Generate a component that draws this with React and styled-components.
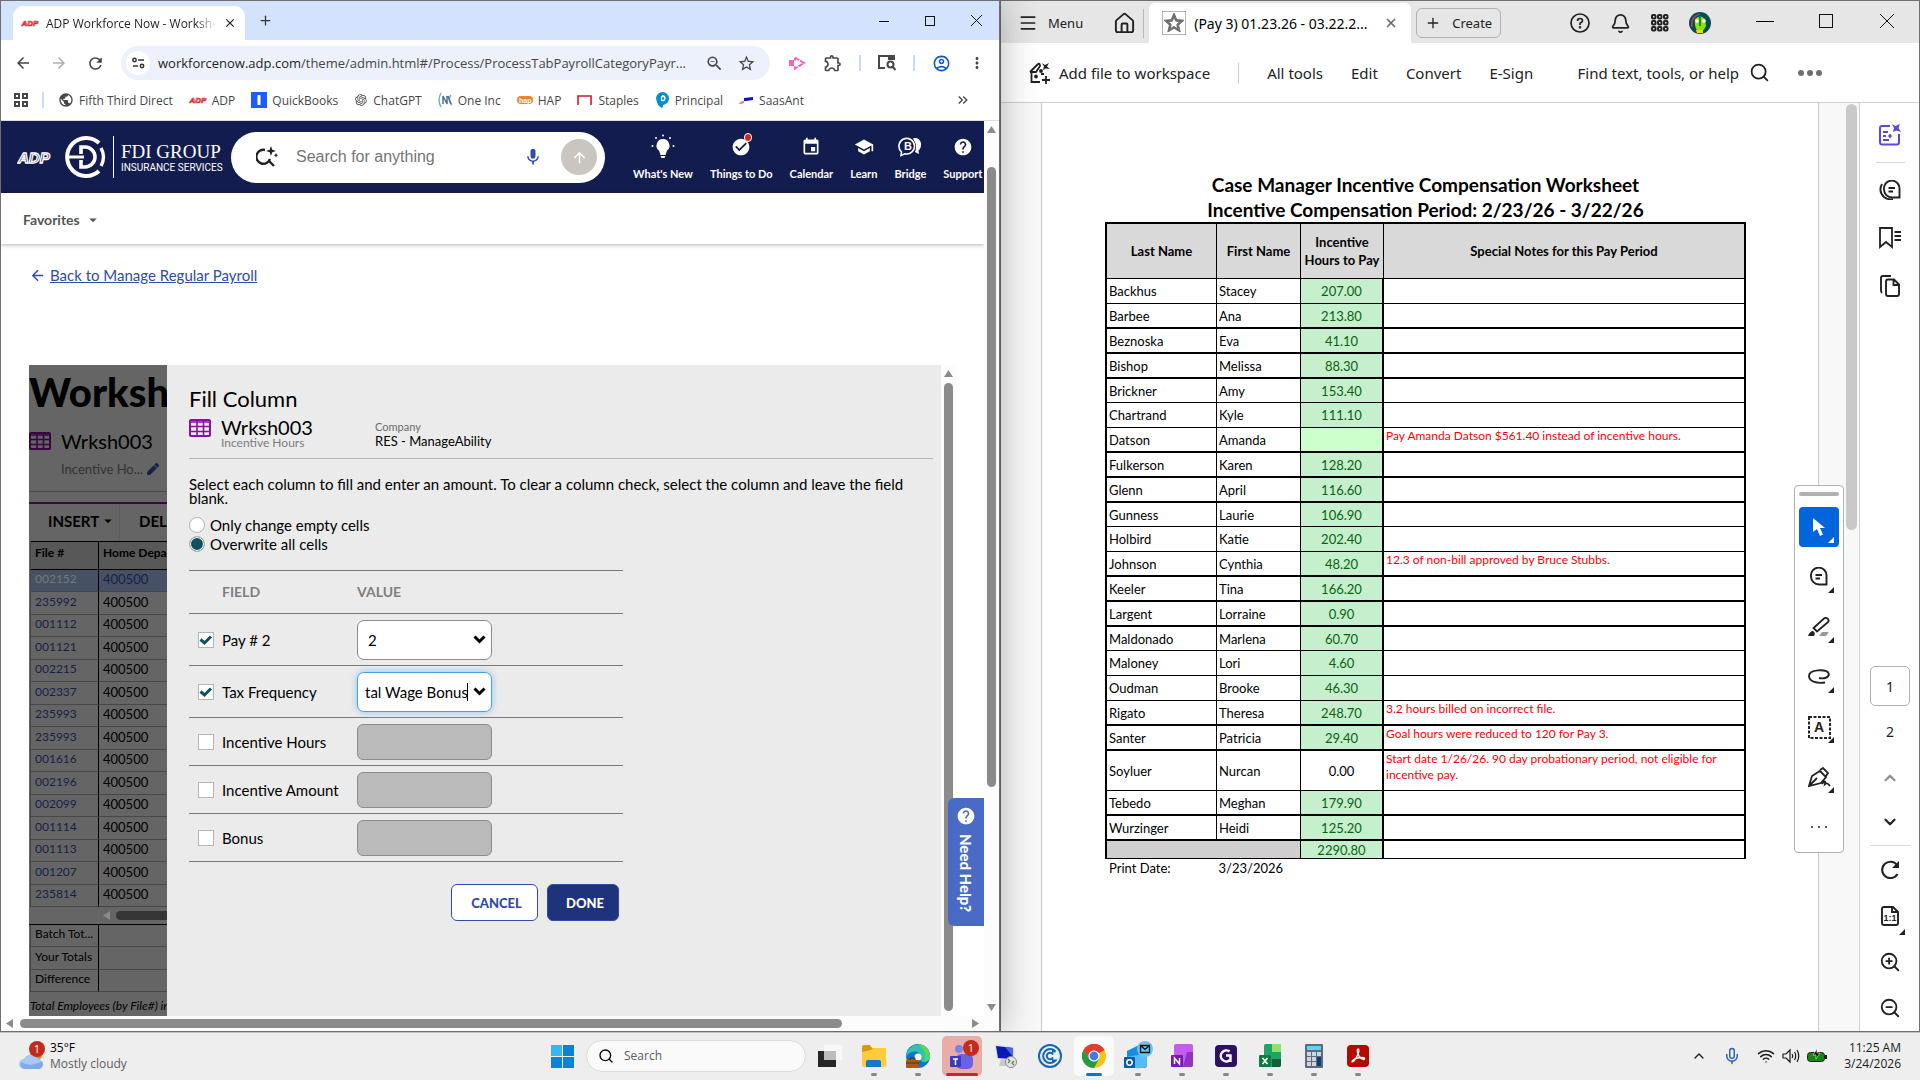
import React from "react";
import styled, { createGlobalStyle } from "styled-components";
import {
  MdArrowBack,
  MdArrowDropDown,
  MdArrowForward,
  MdArrowUpward,
  MdCheckCircle,
  MdClose,
  MdEvent,
  MdHelp,
  MdKeyboardDoubleArrowRight,
  MdMic,
  MdMoreVert,
  MdOutlineAccountCircle,
  MdOutlineExtension,
  MdPublic,
  MdRefresh,
  MdSchool,
  MdStarBorder,
  MdZoomOut,
} from "react-icons/md";
import { RiOpenaiFill } from "react-icons/ri";
import { FaPen } from "react-icons/fa";
import { Bell, ChevronDown, ChevronUp, House, Menu, Mic, Plus, Search, Wifi, X, ZoomIn, ZoomOut } from "lucide-react";

const SEGOE = `"Open Sans", "Noto Sans", sans-serif`;
const ADOBE = `"Noto Sans", "Open Sans", sans-serif`;
const LATO = `Lato, "Open Sans", sans-serif`;

const GlobalStyle = createGlobalStyle`
  * { box-sizing: border-box; }
  body { margin: 0; background: #eee; color: #000; }
  button, input, select { font: inherit; color: inherit; }
  button { background: none; border: 0; padding: 0; display: flex; align-items: center; justify-content: center; }
  p, h1, h2 { margin: 0; }
  svg { display: block; flex: none; }
`;

const Desktop = styled.div`
  height: 100vh;
  display: grid;
  grid-template-rows: minmax(0, 1fr) 48px;
  overflow: hidden;
`;

const Windows = styled.main`
  display: grid;
  grid-template-columns: minmax(0, 25fr) minmax(0, 23fr);
  min-height: 0;
  overflow: hidden;
`;

const Window = styled.section`
  display: flex;
  flex-direction: column;
  min-height: 0;
  border: 1px solid #706e70;
  background: #fff;
`;

const BrowserWindow = styled(Window)`
  font-family: ${SEGOE};
  position: relative;
  z-index: 1;
  box-shadow: 0 0 36px rgba(0, 0, 0, 0.3);
`;

/* ---------- browser chrome ---------- */

const TabStrip = styled.header`
  display: flex;
  align-items: flex-end;
  height: 39px;
  background: #d3e2fd;
  flex: none;
`;

const BrowserTab = styled.div`
  display: flex;
  align-items: center;
  gap: 7px;
  width: 232px;
  height: 34px;
  margin-left: 12px;
  padding: 0 8px;
  border-radius: 10px 10px 0 0;
  background: #fff;
  font-size: 12px;
  color: #1f1f1f;
`;

const TabTitle = styled.span`
  flex: 1;
  overflow: hidden;
  white-space: nowrap;
  mask-image: linear-gradient(90deg, #000 88%, transparent);
`;

const TabAction = styled.button`
  width: 40px;
  height: 39px;
`;

const WindowControls = styled.div`
  display: flex;
  margin-left: auto;
`;

const ControlButton = styled.button`
  width: 46px;
  height: 39px;
`;

const Toolbar = styled.div`
  display: flex;
  align-items: center;
  height: 46px;
  padding: 0 4px;
  color: #474747;
  flex: none;
`;

const ToolButton = styled.button`
  width: ${(p) => p.$w || 36}px;
  height: 34px;
  color: ${(p) => p.$color || "#474747"};
`;

const AddressBar = styled.label`
  display: flex;
  align-items: center;
  flex: 1;
  min-width: 0;
  height: 34px;
  margin: 0 9px 0 8px;
  padding: 0 8px 0 5px;
  border-radius: 17px;
  background: #ecf1fb;
`;

const SiteInfo = styled.span`
  display: flex;
  align-items: center;
  justify-content: center;
  width: 24px;
  height: 24px;
  margin-right: 8px;
  border-radius: 12px;
  background: #fff;
  flex: none;
`;

const Url = styled.span`
  flex: 1;
  overflow: hidden;
  white-space: nowrap;
  font-size: 13px;
  color: #474747;
  b {
    font-weight: 400;
    color: #1f1f1f;
  }
`;

const Divider = styled.span`
  width: 2px;
  height: 16px;
  margin: 0 ${(p) => p.$m || 8}px;
  background: #c8dafc;
`;

const Bookmarks = styled.nav`
  display: flex;
  align-items: center;
  height: 35px;
  padding: 0 28px 6px 13px;
  border-bottom: 1px solid #dcdcdc;
  font-size: 12px;
  color: #474747;
  flex: none;
`;

const Bookmark = styled.a`
  display: flex;
  align-items: center;
  gap: 5px;
  margin-right: 16px;
  color: inherit;
  text-decoration: none;
  white-space: nowrap;
`;

/* ---------- scrollbars ---------- */

const ScrollV = styled.div`
  display: flex;
  flex-direction: column;
  align-items: center;
  width: 15px;
  padding: 5px 0;
  background: #fcfcfc;
  flex: none;
`;

const ScrollH = styled.div`
  display: flex;
  align-items: center;
  height: 15px;
  padding: 0 20px 0 5px;
  background: #fcfcfc;
  flex: none;
`;

const Thumb = styled.div`
  flex: ${(p) => p.$size} 1 0;
  align-self: center;
  ${(p) => (p.$across ? "height: 9px;" : "width: 9px;")}
  border-radius: 5px;
  background: #8b8b8b;
`;

const Track = styled.div`
  flex: ${(p) => p.$size} 1 0;
`;

/* ---------- payroll site ---------- */

const Viewport = styled.div`
  display: flex;
  flex: 1;
  min-height: 0;
`;

const Site = styled.div`
  position: relative;
  display: flex;
  flex-direction: column;
  flex: 1;
  min-width: 0;
  overflow: hidden;
  font-family: ${LATO};
`;

const SiteHeader = styled.header`
  display: flex;
  align-items: center;
  height: 72px;
  padding-left: 16px;
  background: #131c4e;
  color: #fff;
  flex: none;
  overflow: hidden;
`;

const Brand = styled.div`
  display: flex;
  align-items: center;
  width: 167px;
  margin: 0 0 0 13px;
  gap: 7px;
  flex: none;
`;

const BrandText = styled.div`
  display: flex;
  flex-direction: column;
  padding-left: 7px;
  height: 42px;
  justify-content: center;
  border-left: 1px solid #fff;
  white-space: nowrap;
  font: 19px/20px "Liberation Serif", serif;
  small {
    font: 10px/11px Roboto, sans-serif;
  }
`;

const SiteSearch = styled.form`
  display: flex;
  align-items: center;
  width: 374px;
  height: 51px;
  padding: 0 8px 0 25px;
  border-radius: 26px;
  background: #fff;
  flex: none;
  input {
    flex: 1;
    min-width: 0;
    margin-left: 18px;
    padding: 0;
    border: 0;
    outline: 0;
    font: 16px "Liberation Sans", sans-serif;
  }
  input::placeholder {
    color: #757575;
    opacity: 1;
  }
`;

const SendButton = styled.button`
  width: 36px;
  height: 36px;
  margin-left: 18px;
  border-radius: 18px;
  background: #cac5bf;
  color: #fff;
`;

const SiteNav = styled.nav`
  display: flex;
  gap: 17px;
  margin-left: 28px;
`;

const SiteNavItem = styled.button`
  position: relative;
  flex-direction: column;
  gap: 4px;
  font-size: 11px;
  line-height: 16px;
  font-weight: 700;
  color: #fff;
  white-space: nowrap;
  span {
    display: flex;
    align-items: center;
    height: 30px;
  }
`;

const RedDot = styled.i`
  position: absolute;
  top: 1px;
  left: 50%;
  width: 8px;
  height: 9px;
  margin-left: 3px;
  border-radius: 4px;
  border: 1px solid #fff;
  background: #d0271d;
`;

const Favorites = styled.div`
  display: flex;
  align-items: center;
  height: 51px;
  padding: 2px 0 0 22px;
  box-shadow: 0 1px 4px rgba(0, 0, 0, 0.3);
  flex: none;
  button {
    gap: 4px;
    font-size: 14px;
    font-weight: 700;
    color: #555;
  }
`;

const BackLink = styled.a`
  display: flex;
  align-items: center;
  gap: 4px;
  height: 20px;
  margin: 21px 0 80px 28px;
  font-size: 15px;
  color: #2f4ca8;
  text-decoration: none;
  flex: none;
  span {
    text-decoration: underline;
  }
`;

const Frame = styled.div`
  display: flex;
  flex: 1;
  min-height: 0;
  margin: 0 28px;
  overflow: hidden;
`;

/* the worksheet that the slide-in covers with its dark backdrop */
const Dimmed = styled.div`
  width: 138px;
  overflow: hidden;
  background: #656565;
  flex: none;
`;

const SheetTitle = styled.h1`
  height: 66px;
  padding-top: 4px;
  font-size: 40px;
  line-height: 46px;
  font-weight: 900;
`;

const SheetName = styled.div`
  display: flex;
  align-items: center;
  gap: 10px;
  height: 20px;
  font-size: 20px;
`;

const SheetSub = styled.div`
  display: flex;
  align-items: center;
  justify-content: space-between;
  height: 41px;
  padding: 0 8px 4px 32px;
  border-bottom: 1px solid #474747;
  font-size: 13px;
  color: #333;
  white-space: nowrap;
`;

const SheetActions = styled.div`
  display: flex;
  width: 300px;
  height: 39px;
  margin-top: 10px;
  border-top: 2px solid #37073f;
  font-size: 15px;
  font-weight: 700;
  button {
    justify-content: flex-start;
    width: 91px;
    padding: 0 0 4px 19px;
    border-right: 1px solid #5d5d5d;
  }
`;

const SheetTable = styled.table`
  width: 300px;
  margin-left: 1px;
  border-collapse: separate;
  border-spacing: 0;
  border-left: 1px solid #474747;
  font-size: 13px;
  line-height: 16px;
  td,
  th {
    height: 22px;
    padding: 0 0 3px 4px;
    border-bottom: 1px solid #474747;
    font-weight: 400;
    text-align: left;
    white-space: nowrap;
  }
  tr:nth-child(even) > * {
    height: 23px;
  }
  th {
    font-size: 12px;
  }
  td:first-child,
  th:first-child {
    width: 68px;
    border-right: 1px solid #000;
  }
  thead th {
    height: 29px;
    padding-bottom: 5px;
    border-top: 1px solid #000;
    border-bottom-color: #000;
    background: #585858;
    font-weight: 700;
  }
`;

const SheetRow = styled.tr`
  background: ${(p) => (p.$active ? "#465264" : "none")};
  th {
    color: ${(p) => (p.$active ? "#777" : "#172148")};
  }
  td {
    color: ${(p) => (p.$active ? "#172148" : "#000")};
  }
`;

const SheetScroll = styled.div`
  display: flex;
  align-items: center;
  gap: 6px;
  height: 18px;
  padding-left: 74px;
  border-bottom: 1px solid #000;
`;

const SheetThumb = styled.div`
  width: 120px;
  height: 9px;
  border-radius: 5px;
  background: #363636;
  flex: none;
`;

const SheetFoot = styled.p`
  padding: 6px 0 0 1px;
  font-size: 12px;
  line-height: 16px;
  font-style: italic;
  white-space: nowrap;
`;

/* ---------- fill column slide-in ---------- */

const Panel = styled.section`
  flex: 1;
  min-width: 0;
  padding: 19px 8px 0 22px;
  background: #ebebeb;
  font-size: 15px;
`;

const PanelTitle = styled.h2`
  font-size: 22px;
  line-height: 29px;
  font-weight: 400;
`;

const PanelHead = styled.div`
  display: flex;
  height: 46px;
  padding-top: 6px;
  border-bottom: 1px solid #b5b5b5;
`;

const PanelName = styled.div`
  width: 154px;
  margin-left: 10px;
  font-size: 20px;
  line-height: 17px;
  small {
    display: block;
    font-size: 12px;
    line-height: 14px;
    color: #7c7c7c;
  }
`;

const Company = styled.div`
  font-size: 13px;
  line-height: 15px;
  small {
    display: block;
    font-size: 11px;
    color: #6b6b6b;
  }
`;

const Hint = styled.p`
  margin: 18px 0 10px;
  line-height: 14px;
`;

const RadioLabel = styled.label`
  display: flex;
  align-items: center;
  gap: 5px;
  height: 19px;
  input {
    appearance: none;
    width: 16px;
    height: 16px;
    margin: 0;
    border: 1px solid #b5b5b5;
    border-radius: 8px;
    background: #fff;
  }
  input:checked {
    background: #12505f;
    box-shadow: inset 0 0 0 1px #fff;
  }
`;

const FieldTable = styled.table`
  width: 434px;
  margin-top: 17px;
  border-collapse: separate;
  border-spacing: 0;
  border-top: 1px solid #777;
  th,
  td {
    padding: 0;
    border-bottom: 1px solid #777;
    text-align: left;
    font-weight: 400;
  }
  thead th {
    height: 43px;
    padding-bottom: 1px;
    font-size: 14px;
    font-weight: 700;
    color: #7f7f7f;
  }
  thead th:first-child {
    padding-left: 33px;
    width: 168px;
  }
`;

const FieldRow = styled.tr`
  && > * {
    height: ${(p) => (p.$tall ? 52 : 48)}px;
  }
`;

const CheckLabel = styled.label`
  display: flex;
  align-items: center;
  gap: 8px;
  padding-left: 9px;
`;

const CheckBox = styled.span`
  position: relative;
  display: flex;
  input {
    appearance: none;
    width: 16px;
    height: 16px;
    margin: 0;
    border: 1px solid #b5b5b5;
    background: #fff;
  }
  svg {
    position: absolute;
    top: 2px;
    left: 1px;
  }
`;

const Blank = styled.input`
  display: block;
  width: 135px;
  height: 36px;
  border: 1px solid #928b83;
  border-radius: 6px;
  background: #bababa;
`;

const Combo = styled.div`
  display: flex;
  align-items: center;
  width: 135px;
  height: 40px;
  padding: 0 5px 0 7px;
  border: 1px solid ${(p) => (p.$focus ? "#4a9fe6" : "#928b83")};
  border-radius: 7px;
  background: #fff;
  box-shadow: ${(p) => (p.$focus ? "0 0 7px #8cc3f2" : "none")};
  select,
  input {
    appearance: none;
    flex: 1;
    min-width: 0;
    padding: 0;
    border: 0;
    outline: 0;
    background: none;
  }
  select {
    padding-left: 3px;
  }
  input {
    text-align: right;
  }
`;

const Caret = styled.i`
  width: 1px;
  height: 18px;
  margin-right: 5px;
  background: #000;
`;

const PanelButtons = styled.div`
  display: flex;
  justify-content: flex-end;
  gap: 9px;
  width: 430px;
  margin-top: 22px;
`;

const PanelButton = styled.button`
  width: ${(p) => (p.$primary ? 72 : 87)}px;
  height: 37px;
  padding-left: 4px;
  border: 1px solid #2f4ca8;
  border-radius: 6px;
  background: ${(p) => (p.$primary ? "#1f327c" : "#fff")};
  color: ${(p) => (p.$primary ? "#fff" : "#2f4ca8")};
  font-size: 13px;
  font-weight: 900;
`;

const NeedHelp = styled.button`
  position: absolute;
  right: 0;
  bottom: 90px;
  width: 36px;
  height: 128px;
  padding-bottom: 6px;
  gap: 8px;
  writing-mode: vertical-rl;
  border-radius: 6px 0 0 6px;
  background: #4a6bc5;
  color: #fff;
  font-size: 15px;
  font-weight: 900;
`;

/* ---------- pdf reader ---------- */

const ReaderWindow = styled(Window)`
  font-family: ${ADOBE};
  color: #222;
`;

const ReaderTabs = styled.header`
  display: flex;
  align-items: center;
  height: 42px;
  padding: 2px 2px 0 0;
  background: #e6e6e6;
  font-size: 13px;
  flex: none;
`;

const MenuButton = styled.button`
  gap: 10px;
  margin-left: 17px;
`;

const HomeButton = styled.button`
  width: 44px;
  height: 29px;
  margin-left: 17px;
  padding-left: 6px;
  border-right: 1px solid #b8b8b8;
  margin-right: 5px;
`;

const ReaderTab = styled.div`
  display: flex;
  align-items: center;
  align-self: flex-end;
  gap: 8px;
  width: 262px;
  height: 40px;
  padding: 0 13px;
  border-radius: 6px 6px 0 0;
  background: #fff;
  color: #000;
  font-size: 14px;
  white-space: nowrap;
  button {
    margin-left: auto;
  }
`;

const CreateButton = styled.button`
  gap: 11px;
  width: 85px;
  height: 30px;
  margin-left: 5px;
  border: 1px solid #b1b1b1;
  border-radius: 6px;
`;

const ReaderIcons = styled.div`
  display: flex;
  margin-left: auto;
  button {
    width: 40px;
    height: 40px;
  }
`;

const ReaderControls = styled.div`
  display: flex;
  margin-left: 14px;
  button {
    width: 61px;
    height: 40px;
    padding-bottom: 4px;
  }
`;

const ReaderBar = styled.div`
  display: flex;
  align-items: center;
  gap: 28px;
  height: 60px;
  padding: 0 97px 0 28px;
  border-bottom: 1px solid #d0d0d0;
  font-size: 15px;
  white-space: nowrap;
  flex: none;
  button {
    gap: 8px;
  }
`;

const BarDivider = styled.span`
  width: 1px;
  height: 20px;
  background: #c8c8c8;
`;

const FindButton = styled.button`
  && {
    margin-left: auto;
    gap: 10px;
  }
`;

const ReaderBody = styled.div`
  display: flex;
  flex: 1;
  min-height: 0;
`;

const DocArea = styled.div`
  position: relative;
  display: flex;
  flex: 1;
  min-width: 0;
  padding-left: 40px;
  background: #f8f8f8;
`;

const Sheet = styled.article`
  flex: 1;
  min-width: 0;
  padding: 69px 72px 0 63px;
  border: solid #c8c8c8;
  border-width: 0 1px;
  background: #fff;
  font-family: ${LATO};
  color: #000;
`;

const DocTitle = styled.h1`
  padding-top: 1px;
  font-size: 19px;
  line-height: 24px;
  font-weight: 700;
  text-align: center;
`;

const DocScroll = styled.div`
  display: flex;
  flex-direction: column;
  align-items: center;
  width: 40px;
  padding: 1px 1px 0 26px;
  flex: none;
`;

const DocThumb = styled.div`
  width: 11px;
  height: 46%;
  border-radius: 6px;
  background: #c9c9c9;
`;

const HoursTable = styled.table`
  width: 100%;
  table-layout: fixed;
  border-collapse: separate;
  border-spacing: 0;
  border: 2px solid #000;
  border-bottom: 0;
  font-size: 13px;
  line-height: 16px;
  th,
  td {
    padding: 0 2px;
    border-right: 1px solid #000;
  }
  thead th {
    height: 55px;
    padding: 0;
    border-bottom: 1px solid #000;
    background: #d9d9d9;
    line-height: 18px;
  }
  th:nth-child(1) {
    width: 110px;
  }
  th:nth-child(2) {
    width: 84px;
  }
  th:nth-child(3) {
    width: 83px;
  }
  th:last-child,
  td:last-child {
    border-right: 0;
  }
`;

const HoursRow = styled.tr`
  td {
    height: ${(p) => p.$h}px;
    border-bottom: ${(p) => (p.$thick ? 2 : 1)}px solid #000;
  }
`;

const HoursCell = styled.td`
  && {
    border-right-width: 2px;
    background: ${(p) => p.$bg};
    color: ${(p) => (p.$bg === "#fff" ? "#000" : "#0b6110")};
    text-align: center;
  }
`;

const GreyCell = styled.td`
  background: #d0cece;
`;

const NoteCell = styled.td`
  && {
    padding: 0 20px 0 2px;
    color: #f00;
    font-size: 12px;
    vertical-align: top;
  }
`;

const PrintDate = styled.p`
  display: flex;
  gap: 48px;
  padding: 1px 4px;
  font-size: 13px;
  line-height: 16px;
`;

const Palette = styled.div`
  position: absolute;
  top: 382px;
  right: 15px;
  display: flex;
  flex-direction: column;
  align-items: center;
  width: 50px;
  height: 368px;
  padding-top: 6px;
  border: 1px solid #b1b1b1;
  border-radius: 4px;
  background: #fff;
`;

const Grip = styled.div`
  width: 40px;
  height: 4px;
  margin-bottom: 6px;
  border-radius: 2px;
  background: #b1b1b1;
`;

const PaletteButton = styled.button`
  position: relative;
  width: 40px;
  height: 40px;
  margin: 5px 0;
  border-radius: 4px;
  background: ${(p) => (p.$active ? "#0265dc" : "none")};
  color: ${(p) => (p.$active ? "#fff" : "#222")};
`;

const Corner = styled.i`
  position: absolute;
  right: 5px;
  bottom: 4px;
  border: solid transparent;
  border-width: 6px 0 0 6px;
  border-bottom: 6px solid currentColor;
  border-top: 0;
`;

const Rail = styled.aside`
  display: flex;
  flex-direction: column;
  justify-content: space-between;
  align-items: center;
  width: 60px;
  padding: 8px 0 0 1px;
  border-left: 1px solid #d0d0d0;
  flex: none;
`;

const RailGroup = styled.div`
  display: flex;
  flex-direction: column;
  align-items: center;
`;

const RailButton = styled.button`
  position: relative;
  width: 40px;
  height: ${(p) => p.$h || 48}px;
  font-size: 14px;
  color: ${(p) => p.$color || "#222"};
`;

const PageInput = styled.input`
  width: 40px;
  height: 40px;
  padding: 0;
  border: 1px solid #b1b1b1;
  border-radius: 5px;
  text-align: center;
  font-size: 14px;
`;

const RailLine = styled.hr`
  width: ${(p) => p.$w}px;
  margin: ${(p) => p.$m}px 0;
  border: 0;
  border-top: 1px solid #dadada;
`;

/* ---------- taskbar ---------- */

const Taskbar = styled.footer`
  display: grid;
  grid-template-columns: 1fr auto 1fr;
  align-items: center;
  padding-bottom: 1px;
  background: #eee;
  border-top: 1px solid #c4c4c4;
  font-family: ${SEGOE};
  font-size: 12px;
  line-height: 16px;
`;

const Weather = styled.button`
  justify-self: start;
  gap: 4px;
  margin-left: 18px;
  text-align: left;
  p + p {
    color: #5d5d5d;
  }
`;

const Apps = styled.div`
  display: flex;
  align-items: center;
  gap: 4px;
`;

const TaskButton = styled.button`
  position: relative;
  width: 40px;
  height: 40px;
  border-radius: 5px;
  background: ${(p) => p.$bg || "none"};
  &::after {
    content: "";
    position: absolute;
    bottom: 0;
    width: ${(p) => p.$mark || 0}px;
    height: 3px;
    border-radius: 2px;
    background: ${(p) => p.$markColor || "#868686"};
  }
`;

const TaskSearch = styled.label`
  display: flex;
  align-items: center;
  gap: 10px;
  width: 220px;
  height: 32px;
  padding: 0 11px;
  border: 1px solid #dadada;
  border-radius: 16px;
  background: #fafafa;
  input {
    width: 100%;
    padding: 0;
    border: 0;
    background: none;
  }
  input::placeholder {
    color: #5d5d5d;
    opacity: 1;
  }
`;

const Tray = styled.div`
  display: flex;
  align-items: center;
  justify-self: end;
  gap: 16px;
  padding-right: 19px;
  color: #1b1b1b;
`;

const TrayGroup = styled.div`
  display: flex;
  align-items: center;
  gap: 7px;
`;

const Clock = styled.time`
  text-align: right;
  white-space: nowrap;
`;

/* ---------- drawings ---------- */

const AdpMark = ({ w, stroke, fill }) => (
  <svg width={w} height={w / 2} viewBox="0 0 34 17">
    <text x="1" y="14" fontFamily="Liberation Sans" fontStyle="italic" fontWeight="700" fontSize="15" fill={fill} stroke={stroke} strokeWidth="1.3">
      ADP
    </text>
  </svg>
);

const FdiMark = () => (
  <svg width="42" height="42" viewBox="0 0 42 42" fill="none" stroke="#fff" strokeWidth="4">
    <path d="M35 7A19 19 0 1 0 35 35" />
    <path d="M37 12Q42 21 37 30" strokeWidth="3.4" />
    <path d="M2 21H20" strokeWidth="3" />
    <path d="M17 18V11H21A10 10 0 0 1 21 31H17V24" strokeWidth="3.6" />
  </svg>
);

const GridMark = ({ color = "#8b0fa3" }) => (
  <svg width="22" height="18" viewBox="0 0 22 18" fill="none" stroke={color} strokeWidth="2">
    <rect x="1" y="1" width="20" height="16" rx="1" />
    <path d="M1 3H21M1 7.500H21M1 12.500H21M8 2V17M14.500 2V17" strokeWidth="1.600" />
  </svg>
);

const Arrow = ({ dir }) => {
  const d = { up: "M4.500 0L9 7H0Z", down: "M0 0H9L4.500 7Z", left: "M7 0V9L0 4.500Z", right: "M0 0V9L7 4.500Z" }[dir];
  const flat = dir === "up" || dir === "down";
  return (
    <svg width={flat ? 9 : 7} height={flat ? 7 : 9}>
      <path d={d} fill="#8b8b8b" />
    </svg>
  );
};

const BoldChevron = () => (
  <svg width="13" height="9" viewBox="0 0 13 9" fill="none" stroke="#000" strokeWidth="3">
    <path d="M1.500 1.500L6.500 6.500L11.500 1.500" />
  </svg>
);

const MinIcon = ({ w = 10 }) => (
  <svg width={w} height="10" stroke="#000">
    <path d={`M0 5.500H${w}`} />
  </svg>
);
const MaxIcon = ({ w = 10 }) => (
  <svg width={w} height={w} fill="none" stroke="#111">
    <rect x=".5" y=".5" width={w - 1} height={w - 1} />
  </svg>
);
const CloseIcon = ({ w = 11 }) => (
  <svg width={w} height={w} stroke="#111">
    <path d={`M0 0L${w} ${w}M${w} 0L0 ${w}`} />
  </svg>
);

const SparkSearch = () => (
  <svg width="22" height="22" viewBox="0 0 22 22" fill="none" stroke="#222" strokeWidth="2">
    <path d="M9 4A7 7 0 1 0 14 13M13 15L18 20" strokeWidth="2.400" />
    <path d="M15 0L16.300 3.700L20 5L16.300 6.300L15 10L13.700 6.300L10 5L13.700 3.700ZM20 7L20.700 8.600L22 9.300L20.700 10L20 11.600L19.300 10L18 9.300L19.300 8.600Z" fill="#222" stroke="none" />
  </svg>
);

const BulbIcon = () => (
  <svg width="24" height="26" viewBox="0 0 24 26" fill="#fff">
    <path d="M12 5a6.500 6.500 0 0 0-4 11.600L9.500 21h5L16 16.600A6.500 6.500 0 0 0 12 5ZM9.500 22h5l-1 2h-3Z" />
    <circle cx="12" cy="1.500" r="1" />
    <circle cx="5" cy="4" r="1" />
    <circle cx="19" cy="4" r="1" />
    <circle cx="1.500" cy="12" r="1" />
    <circle cx="22.500" cy="12" r="1" />
  </svg>
);

const BridgeIcon = () => (
  <svg width="24" height="20" viewBox="0 0 24 20" fill="none" stroke="#fff" strokeWidth="1.600">
    <path d="M15 1.500C20 -.5 23.500 4 23 8C23 11 21.500 12.500 20.500 13.500L21 17L17 15Q19 10 17 5Z" fill="#fff" stroke="none" />
    <path d="M3 18.500L3.500 15A7.800 7.800 0 1 1 7 16.800Z" />
    <text x="6" y="13" fontFamily="Liberation Sans" fontWeight="700" fontSize="11" fill="#fff" stroke="none">
      B
    </text>
  </svg>
);

const TabSearchIcon = () => (
  <svg width="18" height="16" viewBox="0 0 18 16" fill="none" stroke="#474747" strokeWidth="2">
    <path d="M7 13H1V1H16V5" />
    <path d="M10 1H17V5H10Z" fill="#474747" stroke="none" />
    <circle cx="12.500" cy="9.500" r="3" />
    <path d="M14.500 11.500L17.500 15" />
  </svg>
);

const TuneIcon = () => (
  <svg width="13" height="12" viewBox="0 0 13 12" fill="none" stroke="#333" strokeWidth="1.500">
    <circle cx="2.500" cy="3" r="1.700" />
    <path d="M6 3H12M1 9H6" />
    <circle cx="10" cy="9" r="1.700" />
  </svg>
);

const StaplesIcon = () => (
  <svg width="16" height="16" fill="none" stroke="#cc1c27" strokeWidth="1.600">
    <path d="M1 13V4H14V13" />
  </svg>
);
const HapIcon = () => (
  <svg width="16" height="16">
    <rect y="4" width="16" height="8" rx="4" fill="#f0812b" />
    <text x="2" y="10.500" fontSize="7" fontWeight="700" fontFamily="Liberation Sans" fill="#fff">
      hap
    </text>
  </svg>
);
const PrincipalIcon = () => (
  <svg width="15" height="16" viewBox="0 0 15 16">
    <path d="M1 6A6.500 6.500 0 1 1 8 13Q8 16 7 16Q2 14 1 6Z" fill="#0091cd" />
    <path d="M8 3A3.200 3.200 0 1 1 6 9Q5 4 8 3Z" fill="#fff" />
    <circle cx="8" cy="6.500" r="1.300" fill="#0091cd" />
  </svg>
);
const SaasIcon = () => (
  <svg width="15" height="16">
    <path d="M5 9V6L14 5V8L7 9Z" fill="#1010c8" />
    <path d="M0 12Q1 9 5 9V11Q3 12 0 12Z" fill="#f06ac0" />
  </svg>
);
const QuickIcon = () => (
  <svg width="16" height="16">
    <rect width="16" height="16" fill="#1b5cff" />
    <rect x="6.500" y="3" width="3" height="10" fill="#fff" />
  </svg>
);
const OneIncIcon = () => (
  <svg width="15" height="16" fill="none">
    <path d="M3 1Q-1 8 3 15M13 3Q9 8 14 13" stroke="#6fb4dc" strokeWidth="1.500" />
    <path d="M5 12V4L9 12V4M10 4L13 12" stroke="#56718f" strokeWidth="1.500" />
  </svg>
);
const AppsIcon = () => (
  <svg width="14" height="14" fill="none" stroke="#474747" strokeWidth="2">
    <path d="M1 1H5V5H1ZM9 1H13V5H9ZM1 9H5V13H1ZM9 9H13V13H9Z" />
  </svg>
);
const PinkIcon = () => (
  <svg width="17" height="14" viewBox="0 0 17 14" fill="none">
    <rect y="4" width="5" height="6" fill="#fb62bd" />
    <path d="M6 1.500L15 7L6 12.500V9.500M6 1.500V4.500" stroke="#fb62bd" strokeWidth="2" strokeDasharray="5 1" />
  </svg>
);

const WorkspaceIcon = () => (
  <svg width="22" height="22" viewBox="0 0 22 22" fill="none" stroke="#222" strokeWidth="1.800">
    <path d="M1 10L9 2M1 10H7L11 4Q11 1 9 2M2.500 10V20H11M12 12H15M17 14V22M13 18H21" />
    <path d="M13 1L16 3L20 1L18 4.500L21 7L17 6.500L14 8L15 4.500Z" fill="#222" stroke="none" />
    <circle cx="7" cy="14.500" r="1" fill="#222" />
    <circle cx="12" cy="9" r="1" fill="#222" />
  </svg>
);
const HelpRing = () => (
  <svg width="20" height="20" fill="none" stroke="#222" strokeWidth="1.700">
    <circle cx="10" cy="10" r="9" />
    <path d="M7.500 8Q7.500 5.500 10 5.500Q12.500 5.500 12.500 7.700Q12.500 9 10 10.300V12" />
    <circle cx="10" cy="14.300" r=".5" />
  </svg>
);
const NineIcon = () => (
  <svg width="18" height="18" fill="none" stroke="#222" strokeWidth="2">
    {[1, 7, 13].map((y) => [1, 7, 13].map((x) => <rect key={`${x}-${y}`} x={x} y={y} width="3.500" height="3.500" rx="1" />))}
  </svg>
);
const Avatar = () => (
  <svg width="22" height="22" viewBox="0 0 22 22">
    <circle cx="11" cy="11" r="11" fill="#0b4a55" />
    <path d="M6 7Q11 2 16 7L17 14Q14 21 9 20Q5 15 6 7Z" fill="#8ae600" />
    <path d="M3 15Q1 5 11 2" fill="none" stroke="#d43b60" strokeWidth="1.200" />
    <path d="M7 18H14V21H8Z" fill="#ffd21f" />
    <circle cx="8" cy="9" r="1.800" fill="#fff" />
    <circle cx="15" cy="9" r="1.800" fill="#fff" />
    <path d="M11 4V14" stroke="#0a8f2c" strokeWidth="2" />
  </svg>
);

const AiIcon = () => (
  <svg width="22" height="22" viewBox="0 0 22 22" fill="none" stroke="#5a4bd6" strokeWidth="2">
    <path d="M11 2H3Q1 2 1 4V18Q1 20.500 3 20.500H18Q20 20.500 20 18V10M4 8H9M4 12H7M4 16H10" />
    <path d="M13 0L16.500 2L21 0L19.500 4L22 8L17.500 6.500L14 8L15 4ZM9 12L11 9.500L13 12L11 14.500Z" fill="#5a4bd6" stroke="none" />
  </svg>
);
const CommentIcon = ({ stacked }) => (
  <svg width="22" height="20" viewBox={stacked ? "0 0 22 20" : "2 0 22 20"} fill="none" stroke="#222" strokeWidth="1.900">
    <path d="M5 9.500A7.800 7.800 0 1 1 20.500 9V17.500H13A8 8 0 0 1 5 9.500ZM9.500 8H16M9.500 11.500H14" />
    {stacked && <path d="M3 4Q-1 11 5 17Q9 20 14 19.200" />}
  </svg>
);
const BookmarkIcon = () => (
  <svg width="22" height="22" viewBox="0 0 22 22" fill="none" stroke="#222" strokeWidth="1.800">
    <path d="M1 1H13V20L7 15L1 20ZM15.500 5H22M15.500 9H22M15.500 13H22" />
  </svg>
);
const CopyIcon = () => (
  <svg width="20" height="22" viewBox="0 0 20 22" fill="none" stroke="#222" strokeWidth="1.900">
    <path d="M8 4.500H14L19 9.500V19Q19 21 17 21H8Q6 21 6 19V6.500Q6 4.500 8 4.500ZM13.500 5V10H19M2 18Q1 17 1 15V3Q1 1 3 1H11" />
  </svg>
);
const CursorIcon = () => (
  <svg width="14" height="18">
    <path d="M1 0V14L5 11L8 18L11 16.500L8 10H13Z" fill="#fff" />
  </svg>
);
const HighlightIcon = () => (
  <svg width="22" height="20" viewBox="0 0 22 20" fill="none" stroke="#222" strokeWidth="1.800">
    <path d="M11 19L14 15H21L18 19Z" fill="#999" stroke="none" />
    <path d="M5.500 11L16 1.500Q18 0 20 2Q21.500 4 19.500 5.500L9 14.500Z" />
    <path d="M0 19Q2 14 5 14Q8 16 6 19Z" fill="#222" stroke="none" />
  </svg>
);
const LassoIcon = () => (
  <svg width="22" height="16" viewBox="0 0 22 16" fill="none" stroke="#222" strokeWidth="1.900">
    <path d="M20.500 4C18 0 1 0 1 7C1 12 8 15 17 13.500M20.500 4C22 9 15 10 11 9" />
  </svg>
);
const TextBoxIcon = () => (
  <svg width="23" height="23" viewBox="0 0 23 23">
    <rect x="1" y="1" width="21" height="21" fill="none" stroke="#222" strokeWidth="2" strokeDasharray="3 1.500" />
    <text x="6" y="16" fontFamily="Liberation Sans" fontWeight="700" fontSize="14" fill="#222">
      A
    </text>
  </svg>
);
const SignIcon = () => (
  <svg width="23" height="21" viewBox="0 0 23 21" fill="none" stroke="#222" strokeWidth="1.800">
    <path d="M1 19L4 9L12 4L18 10L13 16L1 19ZM1 19L9 11M12 3L15 1L20 6L18 9M14 17Q18 12 17 17Q19 15 22 19" />
  </svg>
);
const RotateIcon = () => (
  <svg width="20" height="20" fill="none" stroke="#222" strokeWidth="2">
    <path d="M17 5A8.200 8.200 0 1 0 17.500 14" />
    <path d="M19 1V8H12Z" fill="#222" stroke="none" />
  </svg>
);
const FitIcon = () => (
  <svg width="18" height="20" fill="none" stroke="#222" strokeWidth="1.900">
    <path d="M3 1H12L17 6V17Q17 19 15 19H3Q1 19 1 17V3Q1 1 3 1ZM11 1V6H17" />
    <text x="2.500" y="15" fontFamily="Liberation Sans" fontWeight="700" fontSize="9" fill="#222" stroke="none">
      1:1
    </text>
  </svg>
);
const DotsIcon = ({ r, gap, color }) => (
  <svg width={gap * 2 + r * 2} height={r * 2} fill={color}>
    {[0, 1, 2].map((i) => (
      <circle key={i} cx={r + gap * i} cy={r} r={r} />
    ))}
  </svg>
);

const badge = (x, y) => (
  <>
    <circle cx={x} cy={y} r="8" fill="#c42b1c" />
    <text x={x} y={y + 4} textAnchor="middle" fontFamily="Open Sans" fontSize="11" fill="#fff">
      1
    </text>
  </>
);

const WeatherIcon = () => (
  <svg width="28" height="32" viewBox="0 0 28 32">
    <circle cx="18" cy="15" r="6" fill="#f38020" />
    <path d="M6 29A5 5 0 0 1 6 19A7.500 7.500 0 0 1 19 18A6 6 0 0 1 21 29Z" fill="#a9c9f5" />
    <path d="M6 29A5 5 0 0 1 3 22Q12 28 24 21A5 5 0 0 1 21 29Z" fill="#7fa9ea" />
    {badge(19, 9)}
  </svg>
);

const icons = {
  start: (
    <svg width="23" height="23" fill="#0a84d8">
      <path d="M0 0H11V11H0ZM12 0H23V11H12ZM0 12H11V23H0ZM12 12H23V23H12Z" />
      <path d="M0 0H11V11H0Z" fill="#35b8f1" />
    </svg>
  ),
  view: (
    <svg width="24" height="22">
      <rect y="6" width="18" height="16" fill="#262626" />
      <rect x="6" width="18" height="15" fill="#f8f8f8" />
      <rect x="6" y="6" width="12" height="9" fill="#bdbdbd" />
    </svg>
  ),
  files: (
    <svg width="24" height="22">
      <path d="M0 2Q0 0 2 0H8L10 3H22Q24 3 24 5V8H0Z" fill="#d99a07" />
      <path d="M0 7L9 5L11 3H22Q24 3 24 5V20Q24 22 22 22H2Q0 22 0 20Z" fill="#ffcb3c" />
      <path d="M4 22V17Q4 15 6 15H17Q19 15 19 17V22Z" fill="#1179c8" />
    </svg>
  ),
  edge: (
    <svg width="24" height="24">
      <circle cx="12" cy="12" r="12" fill="#1173c7" />
      <path d="M1 8A12 12 0 0 1 24 12Q24 18 17 18Q13 17 15 13Q13 6 6 8Q2 9 0 13Z" fill="#34c0b0" />
      <path d="M12 0A12 12 0 0 1 24 12Q24 17 18 18Q22 8 12 0Z" fill="#5ad65c" />
      <circle cx="12" cy="13" r="3.500" fill="#fff" />
      <rect y="16" width="13" height="8" rx="1" fill="#a85a12" />
      <path d="M4 16V14H9V16M0 19H13" stroke="#5c2d05" fill="none" />
    </svg>
  ),
  teams: (
    <svg width="34" height="34" viewBox="0 0 34 34">
      <circle cx="14" cy="10" r="4" fill="#7b83eb" />
      <rect x="11" y="15" width="17" height="15" rx="5" fill="#6a63e0" />
      <rect x="5" y="17" width="11" height="11" rx="1" fill="#3b3ac0" />
      <path d="M8 20H13M10.500 20V26" stroke="#fff" strokeWidth="1.500" />
      {badge(26, 9)}
    </svg>
  ),
  remote: (
    <svg width="24" height="24">
      <path d="M7 15L14 16L17 22H5Z" fill="#c9c9c9" />
      <path d="M1 1L20 3V17L3 15Z" fill="#d5d9ea" />
      <path d="M2 2L19 4V15L4 14Z" fill="#0a18b4" />
      <path d="M11 3L19 4V13Z" fill="#4a66e0" />
      <circle cx="17" cy="18" r="5.500" fill="#e4e4e4" stroke="#888" />
      <path d="M14 19L16 17L14 15M20 21L18 19L20 17" stroke="#3a8c3a" strokeWidth="1.200" fill="none" />
    </svg>
  ),
  circle: (
    <svg width="24" height="24" fill="none" stroke="#1266b8" strokeWidth="2">
      <circle cx="12" cy="12" r="11" />
      <path d="M17.500 7.500A7 7 0 1 0 17.500 16.500H14M17.500 7.500H14M15 10.500A3.300 3.300 0 1 0 15 13.500" />
    </svg>
  ),
  chrome: (
    <svg width="24" height="24">
      <circle cx="12" cy="12" r="12" fill="#fbc116" />
      <path d="M12 12L1.600 6A12 12 0 0 1 22.400 6Z" fill="#e33b2e" />
      <path d="M12 6H22.400A12 12 0 0 0 1.600 6L7 15Z" fill="#e33b2e" />
      <path d="M1.600 6A12 12 0 0 0 12 24L17 15L12 17L7 15Z" fill="#229a47" />
      <circle cx="12" cy="12" r="5.600" fill="#fff" />
      <circle cx="12" cy="12" r="4.400" fill="#3a7de8" />
    </svg>
  ),
  outlook: (
    <svg width="30" height="30">
      <path d="M4 10L16 4L24 10V24Q24 27 21 27H7Q4 27 4 24Z" fill="#1b8be0" />
      <path d="M4 16L24 12V25Q20 28 12 27Z" fill="#57b9f5" />
      <rect x="1" y="16" width="11" height="11" rx="1" fill="#0c59a4" />
      <circle cx="6.500" cy="21.500" r="2.700" stroke="#fff" strokeWidth="1.500" fill="none" />
      <circle cx="22" cy="8" r="8" fill="#6cc4f2" />
      <path d="M17.500 4.500H26.500V11.500H17.500ZM17.500 4.500L22 8.500L26.500 4.500" stroke="#111" fill="none" strokeWidth="1.300" />
    </svg>
  ),
  onenote: (
    <svg width="22" height="24">
      <rect x="3" width="19" height="23" rx="2" fill="#c45cf0" />
      <path d="M16 8H22V21Q22 23 20 23H12Z" fill="#9332bf" />
      <rect y="11" width="12" height="12" rx="1" fill="#7719aa" />
      <path d="M3.500 20V14L8.500 20V14" stroke="#fff" strokeWidth="1.500" fill="none" />
    </svg>
  ),
  gapp: (
    <svg width="22" height="22">
      <rect width="22" height="22" rx="4" fill="#2d1063" />
      <path d="M14.500 6.500A5.500 5.500 0 1 0 15 15M11 10.500H15.500V17" stroke="#fff" strokeWidth="2.400" fill="none" />
    </svg>
  ),
  excel: (
    <svg width="22" height="24">
      <rect x="5" width="17" height="23" rx="2" fill="#21a366" />
      <path d="M13 0H20Q22 0 22 2V8H13Z" fill="#8fdf6d" />
      <path d="M13 15H22V21Q22 23 20 23H13Z" fill="#185c37" />
      <rect y="11" width="12" height="12" rx="1" fill="#107c41" />
      <path d="M3.500 14L8.500 20M8.500 14L3.500 20" stroke="#fff" strokeWidth="1.600" />
    </svg>
  ),
  calc: (
    <svg width="18" height="24">
      <rect width="18" height="24" rx="1" fill="#5f6b7a" />
      <rect x="2" y="2" width="14" height="4" fill="#5fd3f5" />
      <path d="M2 8H6V12H2ZM7 8H11V12H7ZM12 8H16V12H12ZM2 13H6V17H2ZM7 13H11V17H7ZM2 18H6V22H2ZM7 18H11V22H7Z" fill="#cfd5dc" />
      <rect x="12" y="13" width="4" height="9" fill="#0d3f70" />
    </svg>
  ),
  acrobat: (
    <svg width="22" height="22">
      <rect width="22" height="22" rx="4" fill="#b30b00" />
      <path d="M11 4Q9.500 5 11 9Q13 14 17 14.500Q19 13 15 12.500Q9 12.500 5.500 15.500Q4 18 7 16Q10 12 11.500 8Q12.500 4 11 4Z" fill="none" stroke="#fff" strokeWidth="1.300" />
    </svg>
  ),
};

/* ---------- data ---------- */

const bookmarks = [
  ["Fifth Third Direct", <MdPublic size={16} />],
  ["ADP", <AdpMark w={18} fill="#f7c4c0" stroke="#d0271d" />],
  ["QuickBooks", <QuickIcon />],
  ["ChatGPT", <RiOpenaiFill size={14} />],
  ["One Inc", <OneIncIcon />],
  ["HAP", <HapIcon />],
  ["Staples", <StaplesIcon />],
  ["Principal", <PrincipalIcon />],
  ["SaasAnt", <SaasIcon />],
];

const siteNav = [
  ["What's New", <BulbIcon />],
  ["Things to Do", <MdCheckCircle size={20} />],
  ["Calendar", <MdEvent size={20} />],
  ["Learn", <MdSchool size={20} />],
  ["Bridge", <BridgeIcon />],
  ["Support", <MdHelp size={20} />],
];

const files = [
  "002152", "235992", "001112", "001121", "002215", "002337", "235993", "235993",
  "001616", "002196", "002099", "001114", "001113", "001207", "235814",
];

const people = [
  { last: "Backhus", first: "Stacey", hours: "207.00" },
  { last: "Barbee", first: "Ana", hours: "213.80", thick: true },
  { last: "Beznoska", first: "Eva", hours: "41.10", thick: true },
  { last: "Bishop", first: "Melissa", hours: "88.30", thick: true },
  { last: "Brickner", first: "Amy", hours: "153.40", h: 24 },
  { last: "Chartrand", first: "Kyle", hours: "111.10" },
  { last: "Datson", first: "Amanda", hours: "", bg: "#ccffcc", thick: true, note: "Pay Amanda Datson $561.40 instead of incentive hours." },
  { last: "Fulkerson", first: "Karen", hours: "128.20", thick: true },
  { last: "Glenn", first: "April", hours: "116.60", thick: true },
  { last: "Gunness", first: "Laurie", hours: "106.90", h: 24 },
  { last: "Holbird", first: "Katie", hours: "202.40" },
  { last: "Johnson", first: "Cynthia", hours: "48.20", thick: true, note: "12.3 of non-bill approved by Bruce Stubbs." },
  { last: "Keeler", first: "Tina", hours: "166.20", thick: true },
  { last: "Largent", first: "Lorraine", hours: "0.90", thick: true },
  { last: "Maldonado", first: "Marlena", hours: "60.70", h: 24 },
  { last: "Maloney", first: "Lori", hours: "4.60" },
  { last: "Oudman", first: "Brooke", hours: "46.30" },
  { last: "Rigato", first: "Theresa", hours: "248.70", thick: true, note: "3.2 hours billed on incorrect file." },
  { last: "Santer", first: "Patricia", hours: "29.40", thick: true, note: "Goal hours were reduced to 120 for Pay 3." },
  { last: "Soyluer", first: "Nurcan", hours: "0.00", bg: "#fff", h: 40, note: "Start date 1/26/26. 90 day probationary period, not eligible for incentive pay." },
  { last: "Tebedo", first: "Meghan", hours: "179.90", thick: true },
  { last: "Wurzinger", first: "Heidi", hours: "125.20", thick: true },
];

const tools = [
  ["Comment", <CommentIcon />],
  ["Highlight", <HighlightIcon />],
  ["Draw", <LassoIcon />],
  ["Add text", <TextBoxIcon />],
  ["Sign", <SignIcon />],
];

const apps = [
  { name: "view" },
  { name: "files", mark: 6 },
  { name: "edge", mark: 6 },
  { name: "teams", mark: 32, markColor: "#c42b1c", bg: "#e8aca9" },
  { name: "remote" },
  { name: "circle" },
  { name: "chrome", mark: 16, markColor: "#0078d4", bg: "#fafafa" },
  { name: "outlook", mark: 6 },
  { name: "onenote", mark: 6 },
  { name: "gapp", mark: 6 },
  { name: "excel", mark: 6 },
  { name: "calc", mark: 6 },
  { name: "acrobat", mark: 6 },
];

/* ---------- parts ---------- */

function Field({ label, checked, children, tall }) {
  return (
    <FieldRow $tall={tall}>
      <td>
        <CheckLabel>
          <CheckBox>
            <input type="checkbox" defaultChecked={checked} />
            {checked && (
              <svg width="14" height="12" fill="none" stroke="#12505f" strokeWidth="3">
                <path d="M1.500 5.500L5.500 9L12 2.500" />
              </svg>
            )}
          </CheckBox>
          {label}
        </CheckLabel>
      </td>
      <td>{children || <Blank aria-label={label} disabled />}</td>
    </FieldRow>
  );
}

function Worksheet() {
  return (
    <Dimmed>
      <SheetTitle>Worksheet</SheetTitle>
      <SheetName>
        <GridMark color="#37073f" />
        Wrksh003
      </SheetName>
      <SheetSub>
        Incentive Ho...
        <FaPen size={12} color="#172148" />
      </SheetSub>
      <SheetActions>
        <button>
          INSERT
          <MdArrowDropDown size={18} />
        </button>
        <button>DELETE</button>
      </SheetActions>
      <SheetTable>
        <thead>
          <tr>
            <th>File #</th>
            <th>Home Department</th>
          </tr>
        </thead>
        <tbody>
          {files.map((file, i) => (
            <SheetRow key={i} $active={i === 0}>
              <th>{file}</th>
              <td>400500</td>
            </SheetRow>
          ))}
        </tbody>
      </SheetTable>
      <SheetScroll>
        <Arrow dir="left" />
        <SheetThumb />
      </SheetScroll>
      <SheetTable>
        <tbody>
          {["Batch Tot...", "Your Totals", "Difference"].map((name) => (
            <tr key={name}>
              <th>{name}</th>
              <td />
            </tr>
          ))}
        </tbody>
      </SheetTable>
      <SheetFoot>Total Employees (by File#) in batch</SheetFoot>
    </Dimmed>
  );
}

function FillColumn() {
  return (
    <Panel>
      <PanelTitle>Fill Column</PanelTitle>
      <PanelHead>
        <GridMark />
        <PanelName>
          Wrksh003
          <small>Incentive Hours</small>
        </PanelName>
        <Company>
          <small>Company</small>
          RES - ManageAbility
        </Company>
      </PanelHead>
      <Hint>
        Select each column to fill and enter an amount. To clear a column check, select the column and leave the field
        blank.
      </Hint>
      <RadioLabel>
        <input type="radio" name="mode" />
        Only change empty cells
      </RadioLabel>
      <RadioLabel>
        <input type="radio" name="mode" defaultChecked />
        Overwrite all cells
      </RadioLabel>
      <FieldTable>
        <thead>
          <tr>
            <th>FIELD</th>
            <th>VALUE</th>
          </tr>
        </thead>
        <tbody>
          <Field label="Pay # 2" checked tall>
            <Combo>
              <select aria-label="Pay # 2">
                <option>2</option>
              </select>
              <BoldChevron />
            </Combo>
          </Field>
          <Field label="Tax Frequency" checked tall>
            <Combo $focus>
              <input aria-label="Tax Frequency" defaultValue="tal Wage Bonus" />
              <Caret />
              <BoldChevron />
            </Combo>
          </Field>
          <Field label="Incentive Hours" />
          <Field label="Incentive Amount" />
          <Field label="Bonus" />
        </tbody>
      </FieldTable>
      <PanelButtons>
        <PanelButton>CANCEL</PanelButton>
        <PanelButton $primary>DONE</PanelButton>
      </PanelButtons>
    </Panel>
  );
}

function Browser() {
  return (
    <BrowserWindow>
      <TabStrip>
        <BrowserTab>
          <AdpMark w={18} fill="#f7c4c0" stroke="#d0271d" />
          <TabTitle>ADP Workforce Now - Worksheet</TabTitle>
          <MdClose size={14} />
        </BrowserTab>
        <TabAction aria-label="New tab">
          <Plus size={15} color="#333" />
        </TabAction>
        <WindowControls>
          <ControlButton aria-label="Minimize">
            <MinIcon />
          </ControlButton>
          <ControlButton aria-label="Maximize">
            <MaxIcon />
          </ControlButton>
          <ControlButton aria-label="Close">
            <CloseIcon />
          </ControlButton>
        </WindowControls>
      </TabStrip>
      <Toolbar>
        <ToolButton aria-label="Back">
          <MdArrowBack size={18} />
        </ToolButton>
        <ToolButton aria-label="Forward" $color="#b0b0b0">
          <MdArrowForward size={18} />
        </ToolButton>
        <ToolButton aria-label="Reload">
          <MdRefresh size={19} />
        </ToolButton>
        <AddressBar>
          <SiteInfo>
            <TuneIcon />
          </SiteInfo>
          <Url>
            <b>workforcenow.adp.com</b>/theme/admin.html#/Process/ProcessTabPayrollCategoryPayr...
          </Url>
          <ToolButton $w={32} aria-label="Zoom">
            <MdZoomOut size={19} />
          </ToolButton>
          <ToolButton $w={32} aria-label="Bookmark">
            <MdStarBorder size={19} />
          </ToolButton>
        </AddressBar>
        <ToolButton aria-label="Extension">
          <PinkIcon />
        </ToolButton>
        <ToolButton aria-label="Extensions">
          <MdOutlineExtension size={20} />
        </ToolButton>
        <Divider />
        <ToolButton aria-label="Tab search">
          <TabSearchIcon />
        </ToolButton>
        <Divider />
        <ToolButton aria-label="Profile" $color="#0b57d0">
          <MdOutlineAccountCircle size={19} />
        </ToolButton>
        <ToolButton aria-label="More">
          <MdMoreVert size={18} />
        </ToolButton>
      </Toolbar>
      <Bookmarks>
        <AppsIcon />
        <Divider $m={14} />
        {bookmarks.map(([name, icon]) => (
          <Bookmark key={name} href="#">
            {icon}
            {name}
          </Bookmark>
        ))}
        <Track $size={1} />
        <MdKeyboardDoubleArrowRight size={16} />
      </Bookmarks>
      <Viewport>
        <Site>
          <SiteHeader>
            <AdpMark w={34} fill="#131c4e" stroke="#fff" />
            <Brand>
              <FdiMark />
              <BrandText>
                FDI GROUP
                <small>INSURANCE SERVICES</small>
              </BrandText>
            </Brand>
            <SiteSearch>
              <SparkSearch />
              <input aria-label="Search for anything" placeholder="Search for anything" />
              <MdMic size={20} color="#2f4ca8" />
              <SendButton aria-label="Send">
                <MdArrowUpward size={17} />
              </SendButton>
            </SiteSearch>
            <SiteNav>
              {siteNav.map(([name, icon]) => (
                <SiteNavItem key={name}>
                  <span>{icon}</span>
                  {name}
                  {name === "Things to Do" && <RedDot />}
                </SiteNavItem>
              ))}
            </SiteNav>
          </SiteHeader>
          <Favorites>
            <button>
              Favorites
              <MdArrowDropDown size={18} />
            </button>
          </Favorites>
          <BackLink href="#">
            <MdArrowBack size={17} />
            <span>Back to Manage Regular Payroll</span>
          </BackLink>
          <Frame>
            <Worksheet />
            <FillColumn />
            <ScrollV>
              <Arrow dir="up" />
              <Track $size={1} />
              <Thumb $size={110} />
            </ScrollV>
          </Frame>
          <NeedHelp>
            <MdHelp size={20} />
            Need Help?
          </NeedHelp>
        </Site>
        <ScrollV>
          <Arrow dir="up" />
          <Track $size={34} />
          <Thumb $size={618} />
          <Track $size={216} />
          <Arrow dir="down" />
        </ScrollV>
      </Viewport>
      <ScrollH>
        <Arrow dir="left" />
        <Track $size={7} />
        <Thumb $size={822} $across />
        <Track $size={130} />
        <Arrow dir="right" />
      </ScrollH>
    </BrowserWindow>
  );
}

function Reader() {
  return (
    <ReaderWindow>
      <ReaderTabs>
        <MenuButton>
          <Menu size={20} />
          Menu
        </MenuButton>
        <HomeButton aria-label="Home">
          <House size={23} />
        </HomeButton>
        <ReaderTab>
          <MdStarBorder size={24} color="#6e6e6e" stroke="#6e6e6e" strokeWidth={1} />
          (Pay 3) 01.23.26 - 03.22.2...
          <button aria-label="Close tab">
            <X size={14} color="#6e6e6e" strokeWidth={3} />
          </button>
        </ReaderTab>
        <CreateButton>
          <Plus size={16} />
          Create
        </CreateButton>
        <ReaderIcons>
          <button aria-label="Help">
            <HelpRing />
          </button>
          <button aria-label="Notifications">
            <Bell size={21} />
          </button>
          <button aria-label="Apps">
            <NineIcon />
          </button>
          <button aria-label="Account">
            <Avatar />
          </button>
        </ReaderIcons>
        <ReaderControls>
          <button aria-label="Minimize">
            <MinIcon w={18} />
          </button>
          <button aria-label="Maximize">
            <MaxIcon w={14} />
          </button>
          <button aria-label="Close">
            <CloseIcon w={14} />
          </button>
        </ReaderControls>
      </ReaderTabs>
      <ReaderBar>
        <button>
          <WorkspaceIcon />
          Add file to workspace
        </button>
        <BarDivider />
        <button>All tools</button>
        <button>Edit</button>
        <button>Convert</button>
        <button>E-Sign</button>
        <FindButton>
          Find text, tools, or help
          <Search size={21} />
        </FindButton>
        <DotsIcon r={3} gap={9} color="#6e6e6e" />
      </ReaderBar>
      <ReaderBody>
        <DocArea>
          <Sheet>
            <DocTitle>Case Manager Incentive Compensation Worksheet</DocTitle>
            <DocTitle>Incentive Compensation Period: 2/23/26 - 3/22/26</DocTitle>
            <HoursTable>
              <thead>
                <tr>
                  <th>Last Name</th>
                  <th>First Name</th>
                  <th>Incentive Hours to Pay</th>
                  <th>Special Notes for this Pay Period</th>
                </tr>
              </thead>
              <tbody>
                {people.map((p) => (
                  <HoursRow key={p.last} $h={p.h || 25} $thick={p.thick}>
                    <td>{p.last}</td>
                    <td>{p.first}</td>
                    <HoursCell $bg={p.bg || "#c6efce"}>{p.hours}</HoursCell>
                    <NoteCell>{p.note}</NoteCell>
                  </HoursRow>
                ))}
                <HoursRow $h={18}>
                  <GreyCell colSpan={2} />
                  <HoursCell $bg="#c6efce">2290.80</HoursCell>
                  <NoteCell />
                </HoursRow>
              </tbody>
            </HoursTable>
            <PrintDate>
              <span>Print Date:</span>
              <span>3/23/2026</span>
            </PrintDate>
          </Sheet>
          <DocScroll>
            <DocThumb />
          </DocScroll>
          <Palette>
            <Grip />
            <PaletteButton $active aria-label="Select">
              <CursorIcon />
              <Corner />
            </PaletteButton>
            {tools.map(([name, icon]) => (
              <PaletteButton key={name} aria-label={name}>
                {icon}
                <Corner />
              </PaletteButton>
            ))}
            <PaletteButton aria-label="More tools">
              <DotsIcon r={1} gap={7} color="#222" />
            </PaletteButton>
          </Palette>
        </DocArea>
        <Rail>
          <RailGroup>
            <RailButton aria-label="Assistant">
              <AiIcon />
            </RailButton>
            <RailLine $w={29} $m={3} />
            <RailButton aria-label="Comments">
              <CommentIcon stacked />
            </RailButton>
            <RailButton aria-label="Bookmarks">
              <BookmarkIcon />
            </RailButton>
            <RailButton aria-label="Pages">
              <CopyIcon />
            </RailButton>
          </RailGroup>
          <RailGroup>
            <PageInput aria-label="Page" defaultValue="1" />
            <RailButton $h={50}>2</RailButton>
            <RailButton $h={44} $color="#909090" aria-label="Previous page">
              <ChevronUp size={18} strokeWidth={3} />
            </RailButton>
            <RailButton $h={44} aria-label="Next page">
              <ChevronDown size={18} strokeWidth={3} />
            </RailButton>
            <RailLine $w={41} $m={1} />
            <RailButton $h={46} aria-label="Rotate">
              <RotateIcon />
            </RailButton>
            <RailButton $h={46} aria-label="Fit">
              <FitIcon />
              <Corner />
            </RailButton>
            <RailButton $h={46} aria-label="Zoom in">
              <ZoomIn size={22} />
            </RailButton>
            <RailButton $h={46} aria-label="Zoom out">
              <ZoomOut size={22} />
            </RailButton>
          </RailGroup>
        </Rail>
      </ReaderBody>
    </ReaderWindow>
  );
}

function App() {
  return (
    <Desktop>
      <GlobalStyle />
      <Windows>
        <Browser />
        <Reader />
      </Windows>
      <Taskbar>
        <Weather>
          <WeatherIcon />
          <div>
            <p>35°F</p>
            <p>Mostly cloudy</p>
          </div>
        </Weather>
        <Apps>
          <TaskButton aria-label="Start">{icons.start}</TaskButton>
          <TaskSearch>
            <Search size={16} />
            <input aria-label="Search" placeholder="Search" />
          </TaskSearch>
          {apps.map((a) => (
            <TaskButton key={a.name} aria-label={a.name} $bg={a.bg} $mark={a.mark} $markColor={a.markColor}>
              {icons[a.name]}
            </TaskButton>
          ))}
        </Apps>
        <Tray>
          <ChevronUp size={16} />
          <Mic size={18} color="#2b63b8" />
          <TrayGroup>
            <Wifi size={18} />
            <svg width="18" height="16" fill="none" stroke="#1b1b1b" strokeWidth="1.200">
              <path d="M1 6H4L8 2V14L4 10H1ZM10 6Q11.500 8 10 10M12.500 4Q15 8 12.500 12M15 2Q18.500 8 15 14" />
            </svg>
            <svg width="21" height="14">
              <rect x=".5" y="3.500" width="17" height="9" rx="3" fill="#128a12" stroke="#1b1b1b" />
              <path d="M19 6V10" stroke="#1b1b1b" strokeWidth="2" />
              <path d="M10 0L6 6H9V10L13 4H10Z" fill="#111" stroke="#eee" strokeWidth=".6" />
            </svg>
          </TrayGroup>
          <Clock>
            11:25 AM
            <br />
            3/24/2026
          </Clock>
        </Tray>
      </Taskbar>
    </Desktop>
  );
}

export default App;
